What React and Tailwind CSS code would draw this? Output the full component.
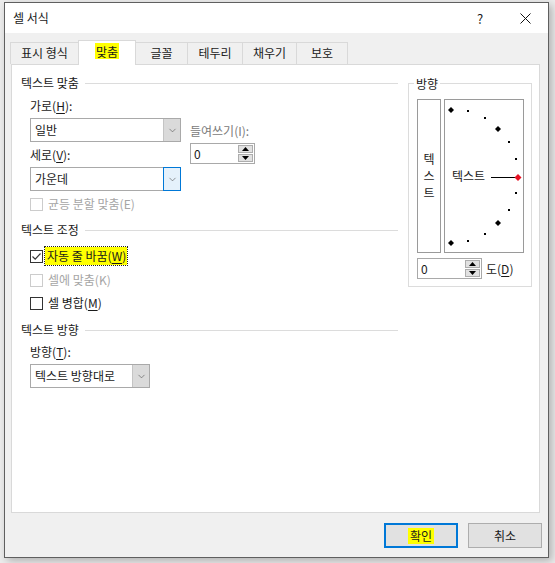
import { ChevronDown } from 'lucide-react'

const tabs = [
  { label: '표시 형식', w: 'w-[69px]' },
  { label: '맞춤', w: 'w-[58px]', active: true },
  { label: '글꼴', w: 'w-[53px]' },
  { label: '테두리', w: 'w-[56px]' },
  { label: '채우기', w: 'w-[55px]' },
  { label: '보호', w: 'w-[52px]' },
]

// mnemonic letter, underlined like a Win32 dialog
function M({ children }) {
  return <span className="underline underline-offset-2">{children}</span>
}

function Legend({ children, className = '' }) {
  return (
    <div className={`flex items-center h-[16px] ${className}`}>
      <span className="leading-none">{children}</span>
      <div className="ml-[6px] flex-1 h-px bg-[#dcdcdc]" />
    </div>
  )
}

function Select({ value, width, focused }) {
  return (
    <div className={`flex h-[24px] border border-[#a9a9a9] bg-white ${width}`}>
      <div className="flex-1 flex items-center pl-[4px] leading-none">{value}</div>
      <div
        className={`w-[17px] flex items-center justify-center ${
          focused ? 'border border-[#0078d7] bg-[#e5f1fb] -m-px ml-0 w-[18px]' : 'bg-[#dadada] border-l border-[#c4c4c4]'
        }`}
      >
        <ChevronDown size={11} strokeWidth={1.3} className="text-[#505050]" />
      </div>
    </div>
  )
}

function Spin({ width, value = '0' }) {
  return (
    <div className={`flex h-[21px] border border-[#a9a9a9] bg-white ${width}`}>
      <div className="flex-1 flex items-center pl-[3px] leading-none">{value}</div>
      <div className="w-[16px] flex flex-col gap-px py-px pr-px">
        <div className="flex-1 bg-[#e1e1e1] border border-[#adadad] flex items-center justify-center">
          <svg width="7" height="4" viewBox="0 0 7 4"><path d="M0 4 L3.5 0 L7 4 Z" fill="#000" /></svg>
        </div>
        <div className="flex-1 bg-[#e1e1e1] border border-[#adadad] flex items-center justify-center">
          <svg width="7" height="4" viewBox="0 0 7 4"><path d="M0 0 L3.5 4 L7 0 Z" fill="#000" /></svg>
        </div>
      </div>
    </div>
  )
}

function Check({ children, checked, disabled, focused, className = '' }) {
  return (
    <div className={`flex items-center h-[16px] pl-[9px] ${className}`}>
      <div
        className={`w-[13px] h-[13px] border flex items-center justify-center bg-white ${
          disabled ? 'border-[#cccccc]' : 'border-[#333333]'
        }`}
      >
        {checked && (
          <svg width="11" height="11" viewBox="0 0 11 11">
            <path d="M1.5 5.5 L4.2 8.2 L9.5 2.5" fill="none" stroke="#333" strokeWidth="1.2" />
          </svg>
        )}
      </div>
      {focused ? (
        <span className="ml-[2px] h-[18px] flex items-center outline-1 outline-dotted outline-[#222] bg-[#ffff00] pl-[2px] pr-[1px] leading-none">
          {children}
        </span>
      ) : (
        <span className={`ml-[5px] leading-none ${disabled ? 'text-[#a6a6a6]' : ''}`}>{children}</span>
      )}
    </div>
  )
}

function Dial() {
  const dots = [
    [24, 12], [41, 19], [65, 43], [72, 60], [72, 94], [65, 111], [41, 135], [24, 142],
  ]
  const diamonds = [
    [7, 11], [54, 30], [54, 124], [7, 144],
  ]
  const dia = (x, y, fill, r = 3) => (
    <path key={`${x}-${y}`} d={`M${x} ${y - r} L${x + r} ${y} L${x} ${y + r} L${x - r} ${y} Z`} fill={fill} />
  )
  return (
    <div className="relative w-[80px] h-[154px] border border-[#9a9a9a] bg-white">
      <svg className="absolute -left-px -top-px" width="80" height="154" viewBox="0 0 80 154">
        {dots.map(([x, y]) => (
          <rect key={`${x}-${y}`} x={x - 1} y={y - 1} width="2" height="2" fill="#000" />
        ))}
        {diamonds.map(([x, y]) => dia(x, y, '#000'))}
        <line x1="47" y1="78.5" x2="71" y2="78.5" stroke="#000" strokeWidth="1" />
        {dia(74, 78.5, '#e81123', 3.5)}
      </svg>
      <div className="absolute left-[7px] top-[70px] leading-none">텍스트</div>
    </div>
  )
}

export default function App() {
  return (
    <div className="w-[555px] h-[563px] overflow-hidden bg-[#ececec] pl-[4px] pt-[2px] font-['Noto_Sans_CJK_KR','Noto_Sans',sans-serif] text-[12px] text-[#1a1a1a]">
      <div className="w-[545px] h-[556px] border border-[#5f5f5f] bg-[#f0f0f0] flex flex-col shadow-[3px_3px_8px_rgba(0,0,0,0.25)]">
        {/* title bar */}
        <div className="h-[30px] bg-white flex items-center pl-[8px]">
          <span className="flex-1 leading-none">셀 서식</span>
          <span className="w-[20px] text-center leading-none text-[13px]">?</span>
          <div className="w-[58px] flex justify-center pl-[13px]">
            <svg width="11" height="11" viewBox="0 0 11 11">
              <path d="M0.5 0.5 L10.5 10.5 M10.5 0.5 L0.5 10.5" stroke="#111" strokeWidth="1" />
            </svg>
          </div>
        </div>

        {/* tabs */}
        <div className="flex items-end pl-[5px] mt-[7px] h-[24px]">
          {tabs.map((t, i) => (
            <div
              key={t.label}
              className={`${t.w} flex items-center justify-center border-[#d9d9d9] ${i > 0 ? '-ml-px' : ''} ${
                t.active
                  ? 'h-[25px] bg-white border-l border-r border-t relative z-10 -mb-px pb-[4px]'
                  : 'h-[22px] border-l border-r border-t pb-[1px]'
              }`}
            >
              {t.active ? (
                <span className="bg-[#ffff00] px-[1px] leading-none pt-[3px] pb-[1px]">{t.label}</span>
              ) : (
                <span className="leading-none">{t.label}</span>
              )}
            </div>
          ))}
        </div>

        {/* panel */}
        <div className="ml-[6px] w-[529px] h-[449px] border border-[#d9d9d9] bg-white flex pt-[10px] pl-[9px]">
          <div className="w-[377px] flex flex-col">
            <Legend>텍스트 맞춤</Legend>

            <div className="flex mt-[7px] pl-[9px]">
              <div className="flex flex-col">
                <div className="h-[16px] flex items-center leading-none">가로(<M>H</M>):</div>
                <div className="mt-[4px]"><Select value="일반" width="w-[151px]" /></div>
                <div className="mt-[5px] h-[16px] flex items-center leading-none">세로(<M>V</M>):</div>
                <div className="mt-[4px]"><Select value="가운데" width="w-[151px]" focused /></div>
              </div>
              <div className="flex flex-col ml-[9px]">
                <div className="mt-[25px] h-[16px] flex items-center leading-none text-[#7a7a7a]">들여쓰기(I):</div>
                <div className="mt-[4px]"><Spin width="w-[65px]" /></div>
              </div>
            </div>

            <Check disabled className="mt-[5px]">균등 분할 맞춤(E)</Check>

            <Legend className="mt-[10px]">텍스트 조정</Legend>
            <Check checked focused className="mt-[10px]">자동 줄 바꿈(<M>W</M>)</Check>
            <Check disabled className="mt-[8px]">셀에 맞춤(K)</Check>
            <Check className="mt-[7px]">셀 병합(<M>M</M>)</Check>

            <Legend className="mt-[11px]">텍스트 방향</Legend>
            <div className="mt-[6px] pl-[9px] h-[16px] flex items-center leading-none">방향(<M>T</M>):</div>
            <div className="mt-[4px] pl-[9px]"><Select value="텍스트 방향대로" width="w-[120px]" /></div>
          </div>

          {/* orientation group */}
          <div className="ml-[10px] w-[124px] mt-[8px] h-[204px] border border-[#dcdcdc] relative pl-[8px] pt-[15px]">
            <div className="absolute -top-[8px] left-[5px] bg-white px-[2px] leading-none h-[16px] flex items-center">방향</div>
            <div className="flex gap-[3px]">
              <div className="w-[24px] h-[154px] border border-[#9a9a9a] flex flex-col items-center justify-center gap-[5px] leading-none">
                <span>텍</span>
                <span>스</span>
                <span>트</span>
              </div>
              <Dial />
            </div>
            <div className="flex items-center mt-[5px]">
              <Spin width="w-[65px]" />
              <span className="ml-[4px] leading-none">도(<M>D</M>)</span>
            </div>
          </div>
        </div>

        {/* buttons */}
        <div className="flex justify-end gap-[10px] mt-[10px] pr-[6px]">
          <div className="w-[74px] h-[25px] border-2 border-[#0078d7] bg-[#e1e1e1] flex items-center justify-center">
            <span className="bg-[#ffff00] px-[2px] leading-none py-[2px]">확인</span>
          </div>
          <div className="w-[74px] h-[25px] border border-[#adadad] bg-[#e1e1e1] flex items-center justify-center leading-none">
            취소
          </div>
        </div>
      </div>
    </div>
  )
}
